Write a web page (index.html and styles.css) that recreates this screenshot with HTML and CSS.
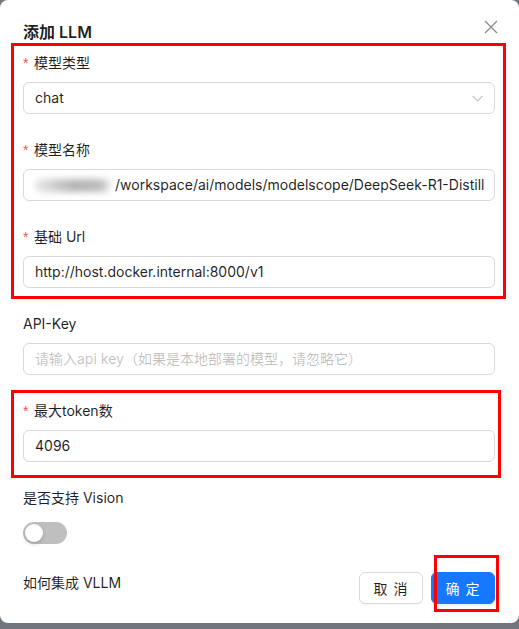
FILE: index.html
```html
<!DOCTYPE html>
<html lang="zh">
<head>
<meta charset="utf-8">
<title>添加 LLM</title>
<link rel="stylesheet" href="styles.css">
</head>
<body>
<div class="modal">
  <button class="close" type="button" aria-label="关闭">
    <svg width="14" height="14" viewBox="0 0 14 14"><path d="M1 1 L13 13 M13 1 L1 13" stroke="#8a8a8a" stroke-width="1.3" fill="none"/></svg>
  </button>
  <div class="title">添加 LLM</div>
  <div class="form">
    <div class="item">
      <div class="label"><span class="req">*</span>模型类型</div>
      <div class="control">
        <div class="field select">
          <span class="value">chat</span>
          <svg class="chev" width="11" height="7" viewBox="0 0 11 7"><path d="M0.5 0.8 L5.5 5.8 L10.5 0.8" stroke="#bfbfbf" stroke-width="1.1" fill="none"/></svg>
        </div>
      </div>
    </div>
    <div class="item">
      <div class="label"><span class="req">*</span>模型名称</div>
      <div class="control">
        <div class="field"><span class="blur"></span><span class="value">/workspace/ai/models/modelscope/DeepSeek-R1-Distill</span></div>
      </div>
    </div>
    <div class="item">
      <div class="label"><span class="req">*</span>基础 Url</div>
      <div class="control">
        <div class="field"><span class="value">http://host.docker.internal:8000/v1</span></div>
      </div>
    </div>
    <div class="item">
      <div class="label">API-Key</div>
      <div class="control">
        <div class="field"><span class="placeholder">请输入api key（如果是本地部署的模型，请忽略它）</span></div>
      </div>
    </div>
    <div class="item">
      <div class="label"><span class="req">*</span>最大token数</div>
      <div class="control">
        <div class="field"><span class="value">4096</span></div>
      </div>
    </div>
    <div class="item last">
      <div class="label">是否支持 Vision</div>
      <div class="control switch-row">
        <span class="switch"><span class="knob"></span></span>
      </div>
    </div>
  </div>
  <div class="footer">
    <span class="help">如何集成 VLLM</span>
    <div class="btns">
      <button class="btn" type="button">取 消</button>
      <button class="btn primary" type="button">确 定</button>
    </div>
  </div>
  <div class="mark mark1"></div>
  <div class="mark mark2"></div>
  <div class="mark mark3"></div>
</div>
</body>
</html>
```
FILE: styles.css
```css
* { box-sizing: border-box; }
html, body { margin: 0; padding: 0; }
body {
  background: #71757c;
  font-family: Inter, "Noto Sans CJK SC", sans-serif;
  font-size: 14px;
  color: rgba(0, 0, 0, 0.88);
  width: 519px;
  height: 629px;
  overflow: hidden;
}
.modal {
  position: relative;
  background: #fff;
  border-radius: 8px;
  width: 519px;
  height: 623px;
  padding: 20px 24px 20px 23px;
}
.close {
  position: absolute;
  top: 20px;
  right: 21px;
  width: 14px;
  height: 14px;
  padding: 0;
  border: 0;
  background: none;
  display: flex;
}
.title {
  font-size: 16px;
  font-weight: 600;
  line-height: 24px;
  margin-bottom: 8px;
}
.form { display: flex; flex-direction: column; }
.item { margin-bottom: 25px; }
.item.last { margin-bottom: 23px; }
.label {
  line-height: 22px;
  padding-bottom: 8px;
  display: flex;
  align-items: flex-start;
}
.req {
  color: #ff4d4f;
  font-family: "Liberation Sans", sans-serif;
  width: 7px;
  margin-right: 4px;
  line-height: 22px;
}
.control { min-height: 32px; display: flex; align-items: center; }
.field {
  width: 100%;
  height: 32px;
  border: 1px solid #d9d9d9;
  border-radius: 6px;
  padding: 0 11px;
  display: flex;
  align-items: center;
  line-height: 22px;
  white-space: nowrap;
  overflow: hidden;
}
.select { justify-content: space-between; }
.blur {
  flex: none;
  width: 76px;
  height: 13px;
  margin-right: 4px;
  border-radius: 6px;
  background: linear-gradient(90deg, rgba(190,190,190,0.35) 0%, rgba(150,150,150,0.7) 50%, rgba(170,170,170,0.8) 85%, rgba(200,200,200,0.4) 100%);
  filter: blur(3px);
}
.placeholder { color: rgba(0, 0, 0, 0.25); }
.switch {
  position: relative;
  width: 44px;
  height: 22px;
  border-radius: 11px;
  background: #bfbfbf;
  display: inline-block;
}
.knob {
  position: absolute;
  top: 2px;
  left: 2px;
  width: 18px;
  height: 18px;
  border-radius: 50%;
  background: #fff;
  box-shadow: 0 2px 4px rgba(0, 35, 11, 0.2);
}
.footer {
  display: flex;
  justify-content: space-between;
  align-items: flex-start;
}
.help { line-height: 22px; }
.btns { display: flex; gap: 8px; }
.btn {
  height: 32px;
  width: 64px;
  padding: 0;
  border: 1px solid #d9d9d9;
  border-radius: 6px;
  background: #fff;
  color: rgba(0, 0, 0, 0.88);
  font-family: Inter, "Noto Sans CJK SC", sans-serif;
  font-size: 14px;
  letter-spacing: 1px;
  box-shadow: 0 2px 0 rgba(0, 0, 0, 0.02);
}
.btn.primary {
  background: #1677ff;
  border-color: #1677ff;
  color: #fff;
  box-shadow: 0 2px 0 rgba(5, 145, 255, 0.1);
}
.mark {
  position: absolute;
  border: 3px solid #ff0000;
  pointer-events: none;
}
.mark1 { left: 11px; top: 43px; width: 495px; height: 256px; }
.mark2 { left: 11px; top: 390px; width: 490px; height: 88px; }
.mark3 { left: 434px; top: 555px; width: 65px; height: 57px; }
```
